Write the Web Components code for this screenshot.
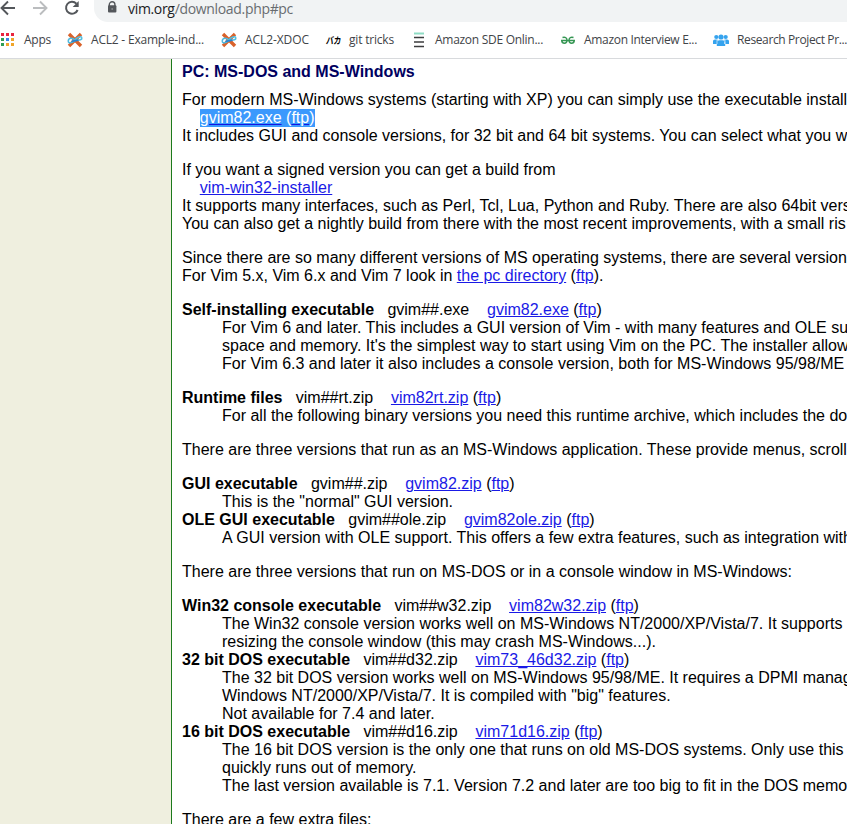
<!DOCTYPE html>
<html lang="en"><head><meta charset="utf-8"><title>Vim download</title>
<style>html,body{margin:0;height:824px;overflow:hidden;background:#fff}</style></head><body>
<browser-window></browser-window>
<script>
const define=(name,css,html,ready)=>{
  const t=document.createElement('template');
  t.innerHTML=`<style>${css}</style>${html}`;
  customElements.define(name,class extends HTMLElement{
    constructor(){super();this.attachShadow({mode:'open'}).append(t.content.cloneNode(true));}
    connectedCallback(){if(ready)ready(this);}
  });
};
// Spreads the label over the width given in the "fit" attribute.
const fit=el=>{
  const w=+el.getAttribute('fit');if(!w)return;
  const s=el.shadowRoot.querySelector('.label');
  const n=[...el.childNodes].filter(c=>c.nodeName!=='svg').map(c=>c.textContent).join('').trim().length;
  s.style.letterSpacing=((w-s.getBoundingClientRect().width)/n)+'px';
};

define('tool-bar',`
:host{display:flex;height:22px;box-sizing:border-box;background:#fff;overflow:hidden;align-items:flex-start}
.nav{flex:none;display:block}
.omni{flex:1;height:22px;background:#f1f3f4;border-radius:0 0 0 14px;display:flex;padding-left:13px;margin-left:4px}
.omni svg{flex:none;display:block}`,
`<svg class="nav" width="90" height="22" fill="none" stroke-width="1.9">
<path d="M15 8H2M8 1.5 1.5 8 8 14.5" stroke="#54575b"/><path d="M33 8H46M40 1.5 46.5 8 40 14.5" stroke="#bbbdbf"/>
<path d="M76.4 3.6A6 6 0 1 0 77.6 10" stroke="#54575b" stroke-width="2"/><path d="M78.7 1V7H72.7Z" fill="#54575b"/></svg>
<div class="omni"><svg width="21" height="22"><path d="M2.3 6.2V4.6a2.8 2.8 0 0 1 5.6 0V6.2" fill="none" stroke="#54575b" stroke-width="1.4"/><rect x="1" y="5.2" width="8.4" height="7.4" rx="1" fill="#54575b"/><circle cx="5.2" cy="8.9" r="1" fill="#85888b"/></svg><url-text fit="165"><b>vim.org</b>/download.php#pc</url-text></div>`);

define('url-text',`:host{display:block;font:14px/18px "Open Sans","Noto Sans",sans-serif;color:#686c70;white-space:nowrap}
::slotted(b){font-weight:400;color:#202124}.label{display:inline-block}`,`<span class="label"><slot></slot></span>`,fit);

define('book-mark',`:host{display:flex;flex:none;align-items:center;gap:8px;height:20px;font:12px/20px "Open Sans","Noto Sans",sans-serif;color:#414448;white-space:nowrap}
::slotted(svg){flex:none;display:block}.label{display:inline-block}`,
`<slot name="icon"></slot><span class="label"><slot></slot></span>`,fit);

const acl=`<svg slot="icon" width="16" height="16" fill="none"><path d="M2 2 14 14M14 2 2 14" stroke="#d9622b" stroke-width="3.4"/><path d="M8 8.300C6 5.500 1.500 5.500 1.300 8.800S5 11 8 8.300" stroke="#4fb9de" stroke-width="1.600"/><path d="M7 9C10 5 14.500 3.500 14.800 6S11 8 8 8.300" stroke="#55bfe0" stroke-width="1.600"/><path d="M4.500 9.300 11.500 8.200" stroke="#2684d0" stroke-width="1.800"/></svg>`;
let dots='';['#e9243f','#e9243f','#e9243f','#2f9e55','#3a84e8','#f0a52a','#2f9e55','#f0a52a','#f0a52a'].forEach((c,i)=>{dots+=`<rect x="${1+i%3*5}" y="${1+(i/3|0)*5}" width="3" height="3" fill="${c}"/>`});
define('bookmarks-bar',`:host{display:grid;grid-template-columns:67px 154px 104px 86px 149px 153px auto;height:37px;box-sizing:border-box;border-bottom:1px solid #d8dadd;padding-top:8px;background:#fff;overflow:hidden}`,
`<book-mark fit="27"><svg slot="icon" width="16" height="16">${dots}</svg>Apps</book-mark>
<book-mark fit="113">${acl}ACL2 - Example-ind...</book-mark>
<book-mark fit="64">${acl}ACL2-XDOC</book-mark>
<book-mark fit="45"><svg slot="icon" width="16" height="16"><text x="2.500" y="12" textLength="15" lengthAdjust="spacingAndGlyphs" transform="skewX(-8)" font-family="Noto Sans CJK JP,sans-serif" font-size="9.500" font-weight="700" fill="#000">バカ</text></svg>git tricks</book-mark>
<book-mark fit="108"><svg slot="icon" width="16" height="16"><path d="M3 1.500H13" stroke="#8fdcc4" stroke-width="2"/><path d="M3 5.500H13M3 10H13M3 14.500H13" stroke="#3c3c3e" stroke-width="1.700"/></svg>Amazon SDE Onlin...</book-mark>
<book-mark fit="113"><svg slot="icon" width="16" height="16" fill="none" stroke="#359653" stroke-width="1.500"><path d="M1 8.500H15M2.500 5.500Q7 4.500 7 8.500Q6.800 11.300 4.400 11.300T1.800 8.800M13.500 5.500Q9 4.500 9 8.500Q9.200 11.300 11.600 11.300T14.200 8.800"/></svg>Amazon Interview E...</book-mark>
<book-mark fit="110"><svg slot="icon" width="16" height="16" fill="#35a3ee"><circle cx="3.300" cy="5" r="2.100"/><circle cx="12.700" cy="5" r="2.100"/><circle cx="8" cy="5" r="2.600"/><path d="M0 12V9Q0 7.500 2 7.500H4.500V12ZM16 12V9Q16 7.500 14 7.500H11.500V12ZM3.800 14V10.500Q4 8.200 6.500 8.200H9.500Q12 8.200 12.200 10.500V14Z"/><path d="M4 7.500V12M12 7.500V12" stroke="#fff" stroke-width=".6"/></svg>Research Project Pr...</book-mark>`);

define('file-entry',`:host{display:block}.text{margin-left:40px}`,
`<div><slot name="head"></slot></div><div class="text"><slot></slot></div>`);

const sp='&nbsp;&nbsp;',a=t=>`<a href="#">${t}</a>`;
const entry=(t,f,l,body)=>`<file-entry><span slot="head"><b>${t}</b>${sp} ${f} ${sp} ${a(l)} (${a('ftp')})</span>${body}</file-entry>`;
define('vim-page',`:host{display:flex;height:765px;overflow:hidden;background:#fff;font:16px/18px "Liberation Sans",Arial,sans-serif;color:#000;white-space:nowrap}
aside{flex:none;width:171px;background:#efefdf;border-right:1px solid #1c7a1c}
main{flex:1;min-width:0;padding:4px 0 0 10px}
h1{font-size:16px;line-height:18px;margin:0 0 10px;color:#000060}
p,section{margin:0 0 16px}
a{color:#1a1ae6;text-decoration:underline}
.sel{background:#3b99fd;color:#fff;display:inline-block;height:18px}.sel a{color:#fff;text-decoration-color:#1414e0}`,
`<aside></aside><main><h1>PC: MS-DOS and MS-Windows</h1>
<p>For modern MS-Windows systems (starting with XP) you can simply use the executable install<br>
&nbsp;&nbsp;&nbsp;&nbsp;<span class="sel">${a('gvim82.exe')} (${a('ftp')})</span><br>
It includes GUI and console versions, for 32 bit and 64 bit systems. You can select what you w</p>
<p>If you want a signed version you can get a build from<br>&nbsp;&nbsp;&nbsp;&nbsp;${a('vim-win32-installer')}<br>
It supports many interfaces, such as Perl, Tcl, Lua, Python and Ruby. There are also 64bit vers<br>
You can also get a nightly build from there with the most recent improvements, with a small ris</p>
<p>Since there are so many different versions of MS operating systems, there are several version<br>
For Vim 5.x, Vim 6.x and Vim 7 look in ${a('the pc directory')} (${a('ftp')}).</p>
<section>${entry('Self-installing executable','gvim##.exe','gvim82.exe',`For Vim 6 and later. This includes a GUI version of Vim - with many features and OLE su<br>space and memory. It's the simplest way to start using Vim on the PC. The installer allow<br>For Vim 6.3 and later it also includes a console version, both for MS-Windows 95/98/ME`)}</section>
<section>${entry('Runtime files','vim##rt.zip','vim82rt.zip','For all the following binary versions you need this runtime archive, which includes the do')}</section>
<p>There are three versions that run as an MS-Windows application. These provide menus, scroll</p>
<section>${entry('GUI executable','gvim##.zip','gvim82.zip','This is the "normal" GUI version.')}${entry('OLE GUI executable','gvim##ole.zip','gvim82ole.zip','A GUI version with OLE support. This offers a few extra features, such as integration with')}</section>
<p>There are three versions that run on MS-DOS or in a console window in MS-Windows:</p>
<section>${entry('Win32 console executable','vim##w32.zip','vim82w32.zip','The Win32 console version works well on MS-Windows NT/2000/XP/Vista/7. It supports<br>resizing the console window (this may crash MS-Windows...).')}${entry('32 bit DOS executable','vim##d32.zip','vim73_46d32.zip','The 32 bit DOS version works well on MS-Windows 95/98/ME. It requires a DPMI manag<br>Windows NT/2000/XP/Vista/7. It is compiled with "big" features.<br>Not available for 7.4 and later.')}${entry('16 bit DOS executable','vim##d16.zip','vim71d16.zip','The 16 bit DOS version is the only one that runs on old MS-DOS systems. Only use this<br>quickly runs out of memory.<br>The last version available is 7.1. Version 7.2 and later are too big to fit in the DOS memo')}</section>
<p>There are a few extra files:</p></main>`);

define('browser-window',`:host{display:block;width:847px;height:824px;overflow:hidden}`,
`<tool-bar></tool-bar><bookmarks-bar></bookmarks-bar><vim-page></vim-page>`);
</script></body></html>
